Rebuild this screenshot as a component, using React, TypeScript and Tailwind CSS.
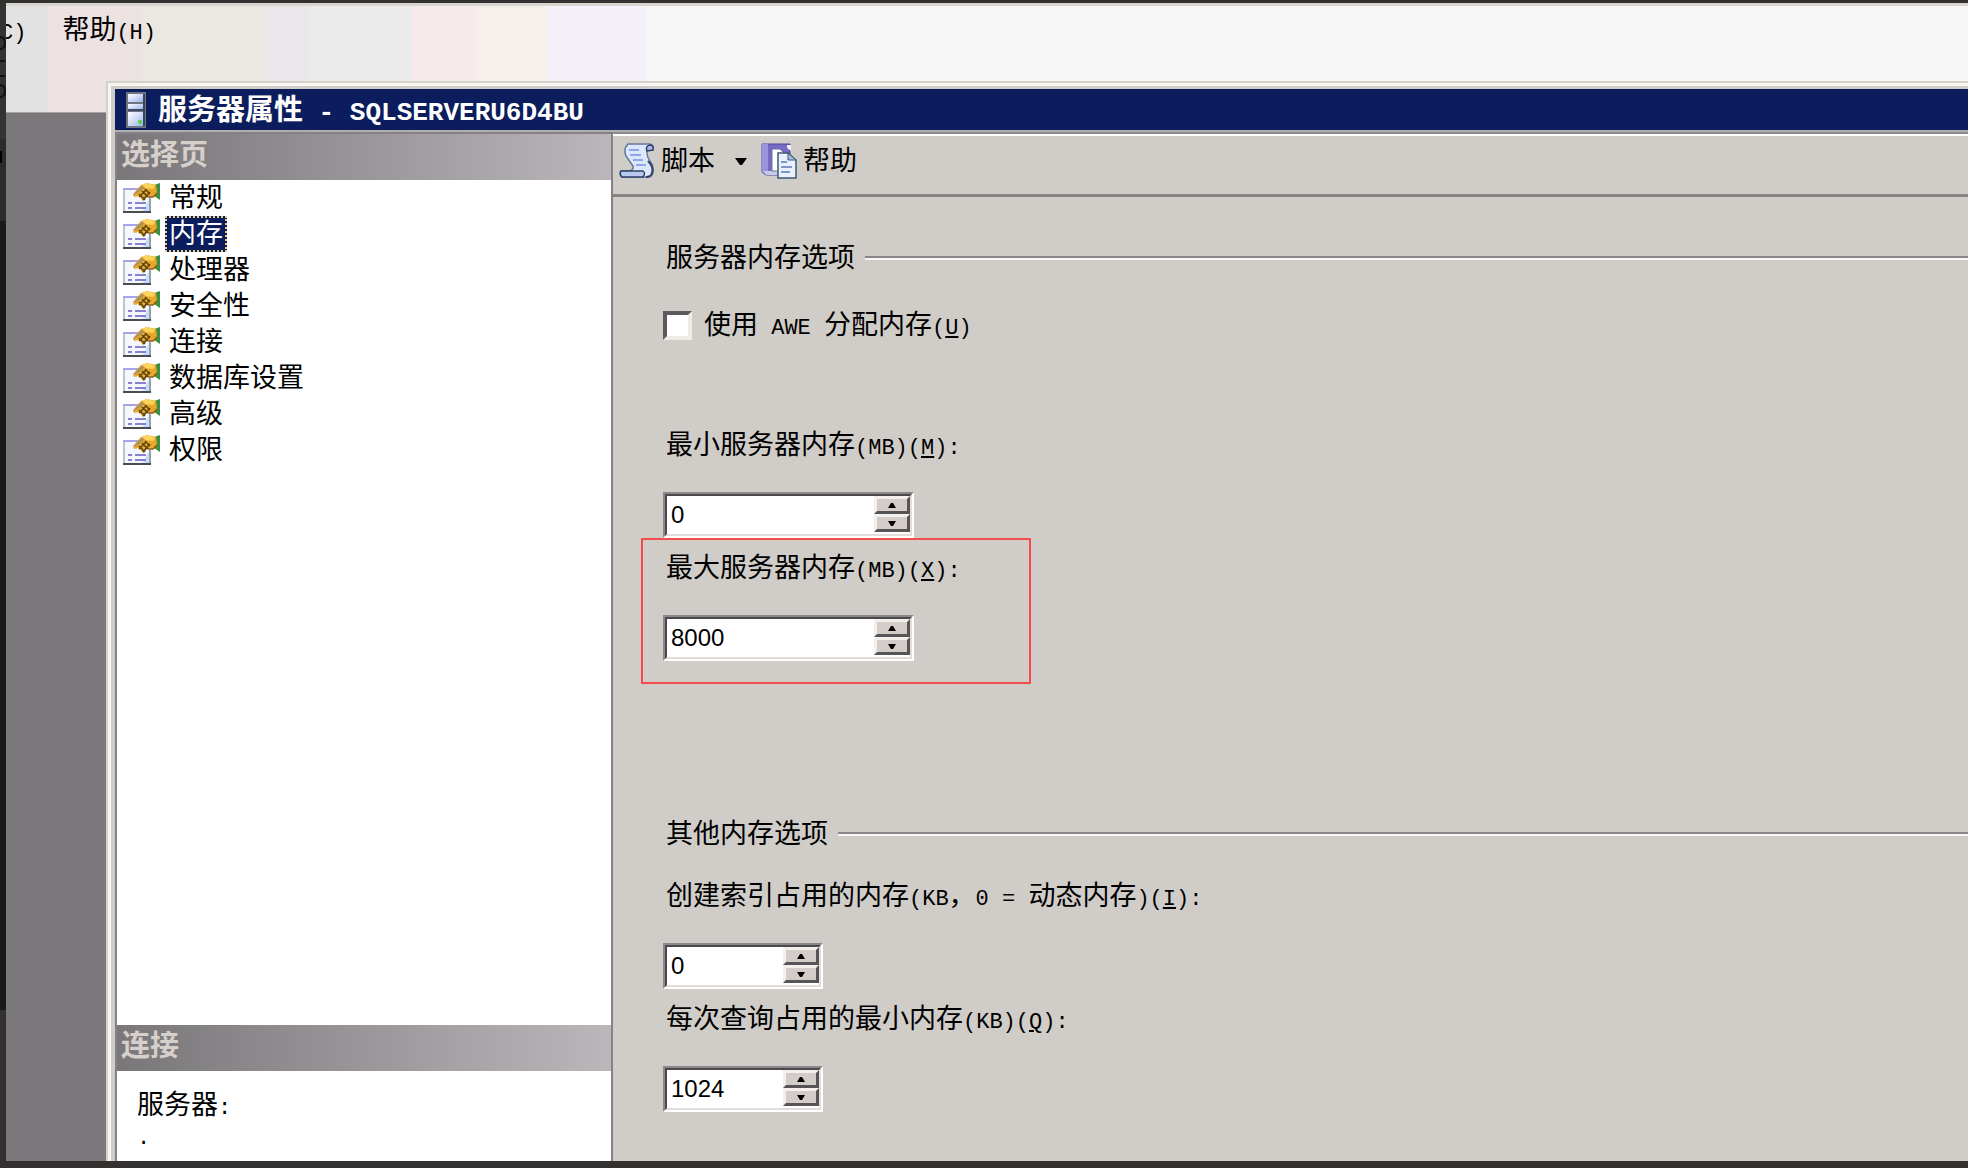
import type { ReactNode } from "react";
import { useState } from "react";

const pages = ["常规", "内存", "处理器", "安全性", "连接", "数据库设置", "高级", "权限"];

function Latin({ children }: { children: ReactNode }) {
  return (
    <span className="font-['Liberation_Mono',monospace] text-[22px] leading-none whitespace-pre">
      {children}
    </span>
  );
}

function ServerIcon() {
  return (
    <svg viewBox="0 0 20 36" className="h-9 w-5 shrink-0" aria-hidden="true">
      <defs>
        <linearGradient id="server" x1="0" y1="0" x2="1" y2="1">
          <stop offset="0" stopColor="#ffffff" />
          <stop offset="1" stopColor="#9fb4ec" />
        </linearGradient>
      </defs>
      <rect x="0" y="0" width="20" height="36" fill="#6f7683" />
      <rect x="2" y="2" width="15" height="8" fill="url(#server)" />
      <rect x="2" y="12" width="15" height="5" fill="url(#server)" />
      <rect x="2" y="20" width="15" height="14" fill="url(#server)" />
      <rect x="17" y="2" width="2" height="32" fill="#3c4557" />
      <rect x="2" y="17" width="15" height="2" fill="#404a66" />
      <circle cx="14" cy="30" r="2" fill="#4fd53a" />
    </svg>
  );
}

function PageIcon() {
  return (
    <svg viewBox="0 0 37 32" className="h-8 w-[37px] shrink-0" aria-hidden="true">
      <rect x="1" y="7" width="26" height="23" fill="#f4f7ff" />
      <path d="M19 30 L27 16 V30 Z" fill="#c3e0f8" />
      <path d="M1 7 V29" stroke="#c2c2c6" strokeWidth="2" />
      <path d="M0 7 H17" stroke="#a9a4e8" strokeWidth="2" />
      <path d="M27 16 V30" stroke="#98a0ae" strokeWidth="2" />
      <path d="M0 30 H28" stroke="#4c4c50" strokeWidth="2" />
      <path d="M5 21 H9 M12 21 H23 M5 26 H9 M12 26 H23" stroke="#8a80d0" strokeWidth="2" />
      <path d="M31 3 L37 1 V18 L31 14 Z" fill="#3f8f42" />
      <path d="M10 12 L18 3 L24 1 L33 3 L34 11 L29 15 L25 14 L20 19 L16 14 L11 15 Z" fill="#e9a82b" />
      <path d="M19 3 L25 1 L32 4 L30 7 L22 6 Z" fill="#ffd45a" />
      <path d="M10 13 L18 4 L22 5 L15 11 Z" fill="#a9925a" />
      <path d="M16 12 L22 18 M19 9 L25 15 M22 7 L27 12 M16 15 L23 8 M20 18 L27 10" stroke="#5b4310" strokeWidth="1.5" />
      <path d="M25 15 L30 15 L34 11" stroke="#8f5a12" strokeWidth="1.5" fill="none" />
    </svg>
  );
}

function ScriptIcon() {
  return (
    <svg viewBox="0 0 36 36" className="size-9 shrink-0" aria-hidden="true">
      <path
        d="M9 1 H31 Q35 2 34 7 H28 V10 Q28 14 31 18 Q35 23 34 29 Q33 34 29 34 H3 Q0 31 2 28 H10 Q15 27 14 23 L7 13 Q4 6 9 1 Z"
        fill="#dce6fc"
        stroke="#66779c"
        strokeWidth="1.5"
      />
      <path d="M28 8 Q26 3 31 2 Q35 2 34 7 Z" fill="#a8bbe0" stroke="#2e4166" strokeWidth="1.5" />
      <path d="M29 18 Q35 24 33 30 Q32 34 27 34" stroke="#2e4166" strokeWidth="2" fill="none" />
      <path d="M2 28 H24 Q27 30 24 34 H3 Q0 31 2 28 Z" fill="#b9c9ef" stroke="#2e4166" strokeWidth="1.5" />
      <path d="M10 7 H20 M11 12 H22 M14 17 H24 M17 22 H27" stroke="#91a6e8" strokeWidth="2" />
    </svg>
  );
}

function HelpIcon() {
  return (
    <svg viewBox="0 0 36 36" className="size-9 shrink-0" aria-hidden="true">
      <path d="M1 1 H29 V29 L25 32 H5 L1 29 Z" fill="#7769c4" stroke="#51499b" strokeWidth="1" />
      <path d="M1 1 H7 V32 L1 29 Z" fill="#9c92de" />
      <path d="M2 28 H22 V32 H5 Z" fill="#c9c8e8" />
      <path d="M26 2 H30 V8 L26 5 Z" fill="#f3f1ff" />
      <path d="M11 6 H19 L24 11 V28 H11 Z" fill="#ffffff" stroke="#667996" strokeWidth="1" />
      <path d="M17 10 H27 L35 17 V35 H17 Z" fill="#e9f1fd" stroke="#3d5878" strokeWidth="1.5" />
      <path d="M27 10 V17 H35 Z" fill="#a9bed8" stroke="#3d5878" strokeWidth="1" />
      <path d="M20 19 H26 M20 24 H31 M20 29 H29" stroke="#7f96c8" strokeWidth="2" />
    </svg>
  );
}

function Arrow({ down }: { down?: boolean }) {
  return (
    <svg viewBox="0 0 8 5" className="h-[5px] w-2" aria-hidden="true">
      <path d={down ? "M0 0 H8 L5 5 H3 Z" : "M0 5 H8 L5 0 H3 Z"} fill="#000" />
    </svg>
  );
}

const spinClass =
  "flex h-[18px] w-9 items-center justify-center border-3 border-t-[#f3efec] border-l-[#f3efec] border-r-[#565456] border-b-[#565456] bg-[#d3ccc8]";

interface FieldProps {
  id: string;
  label: ReactNode;
  initial: number;
  wide?: boolean;
}

function NumberField({ id, label, initial, wide }: FieldProps) {
  const [value, setValue] = useState(initial);

  return (
    <div>
      <label htmlFor={id} className="block h-9 pl-[3px] whitespace-nowrap">
        {label}
      </label>

      <div
        className={`mt-[29px] border-2 border-t-[#8a888a] border-l-[#8a888a] border-r-white border-b-white ${
          wide ? "w-[251px]" : "w-40"
        }`}
      >
        <div className="flex h-[42px] border-2 border-t-[#4b494b] border-l-[#4b494b] border-r-[#e2ddd9] border-b-[#e2ddd9] bg-white">
          <input
            id={id}
            type="text"
            inputMode="numeric"
            value={value}
            onChange={(e) => setValue(Number(e.target.value) || 0)}
            className="min-w-0 flex-1 pl-1 text-2xl leading-none outline-none"
          />
          <div className="flex flex-col">
            <button type="button" aria-label="+" className={spinClass} onClick={() => setValue(value + 1)}>
              <Arrow />
            </button>
            <button type="button" aria-label="-" className={spinClass} onClick={() => setValue(Math.max(0, value - 1))}>
              <Arrow down />
            </button>
          </div>
        </div>
      </div>
    </div>
  );
}

function SectionTitle({ children }: { children: ReactNode }) {
  return (
    <div className="flex h-9 items-center gap-[10px] pl-[3px]">
      <h2 className="whitespace-nowrap">{children}</h2>
      <div className="h-1 flex-1 border-t-2 border-b-2 border-t-[#88858a] border-b-[#f8f7f6]" />
    </div>
  );
}

function PanelHeader({ children }: { children: ReactNode }) {
  return (
    <h2 className="h-[46px] shrink-0 bg-linear-to-r from-[#7a777a] to-[#bab6ba] pl-1 text-[29px] leading-[42px] font-bold text-[#d6cfca]">
      {children}
    </h2>
  );
}

export default function App() {
  const [selected, setSelected] = useState("内存");

  return (
    <div className="flex min-h-screen flex-col overflow-hidden bg-[#333130] pt-[3px] pb-[7px] font-['Liberation_Sans','Noto_Sans_CJK_SC',sans-serif] text-[27px] leading-9 text-black">
      <div className="flex flex-1">

        <div className="flex w-[6px] shrink-0 flex-col overflow-hidden">
          <div className="h-[136px] bg-[#333333]">
            <svg viewBox="0 0 6 136" className="h-[136px] w-[6px]" aria-hidden="true">
              <path d="M0 34 Q5 34 5 40 Q5 46 0 46 M0 58 H5 M0 73 H5 M0 82 Q5 82 5 88 Q5 94 0 94" stroke="#111" strokeWidth="2" fill="none" />
            </svg>
          </div>
          <div className="h-[82px] bg-[#2b2b2b] pt-3">
            <div className="h-3 w-[2px] bg-black" />
          </div>
          <div className="flex-1 bg-[#191919]" />
          <div className="h-[151px] bg-[#333130]" />
        </div>

        <div className="flex min-w-0 flex-1 flex-col border-t-3 border-[#d8d4cf] bg-[linear-gradient(90deg,#e2e2e2_42px,#ece2e1_42px_135px,#ebe8e2_135px_258px,#eae6ea_258px_302px,#ebebeb_302px_406px,#f6ebea_406px_471px,#f5f0ea_471px_541px,#f5f0f7_541px_640px,#f6f6f6_640px)]">
          <nav className="flex h-[75px] items-start gap-9 overflow-hidden pt-[6px]">
            <button type="button" className="-ml-[6px]">
              <Latin>C)</Latin>
            </button>
            <button type="button">
              帮助<Latin>(H)</Latin>
            </button>
          </nav>

          <div className="flex flex-1">
            <div className="mt-[31px] w-[100px] shrink-0 border-t border-[#a5a2a4] bg-[#7b787b]" />

            <div className="flex min-w-0 flex-1 flex-col border-t-2 border-l-2 border-[#d5d2cc] bg-[#d0cdc8]">
              <div className="flex flex-1 flex-col border-t-3 border-l-3 border-[#f7f6f1] pt-[3px] pl-1">

                <header className="flex h-[41px] items-center gap-3 bg-[#0c1d5d] pl-[11px] text-white">
                  <ServerIcon />
                  <h1 className="text-[29px] font-bold whitespace-nowrap">
                    服务器属性
                    <span className="font-['Liberation_Mono',monospace] text-[26px] leading-none"> - SQLSERVERU6D4BU</span>
                  </h1>
                </header>

                <div className="flex flex-1 border-t-2 border-[#b0aeb0]">
                  <aside className="flex w-[498px] shrink-0 flex-col border-t-2 border-r-2 border-l-2 border-[#858287] bg-white">
                    <PanelHeader>选择页</PanelHeader>

                    <ul className="flex-1">
                      {pages.map((page) => (
                        <li key={page} className="flex h-9 items-center gap-[5px] pl-[6px]">
                          <PageIcon />
                          <button
                            type="button"
                            onClick={() => setSelected(page)}
                            className={
                              page === selected
                                ? "flex h-9 items-center border-2 border-dotted border-[#e8cf87] bg-[#0c1d5d] px-[2px] text-white"
                                : "flex h-9 items-center px-1"
                            }
                          >
                            {page}
                          </button>
                        </li>
                      ))}
                    </ul>

                    <PanelHeader>连接</PanelHeader>
                    <div className="h-[90px] overflow-hidden pt-4 pl-5">
                      <p>服务器<Latin>:</Latin></p>
                      <p className="leading-6"><Latin>.</Latin></p>
                    </div>
                  </aside>

                  <main className="min-w-0 flex-1 border-t-2 border-[#8c8a8c]">
                    <div className="flex h-[63px] items-center border-t-2 border-b-3 border-t-white border-b-[#858585] pb-2 pl-[6px]">
                      <button type="button" className="flex items-center gap-[6px]">
                        <ScriptIcon />
                        脚本
                        <svg viewBox="0 0 12 7" className="mx-[14px] h-[7px] w-3" aria-hidden="true">
                          <path d="M0 0 H12 L7 7 H5 Z" fill="#000" />
                        </svg>
                      </button>
                      <button type="button" className="flex items-center gap-[6px]">
                        <HelpIcon />
                        帮助
                      </button>
                    </div>

                    <form className="pt-[43px] pl-[50px]">
                      <SectionTitle>服务器内存选项</SectionTitle>

                      <div className="mt-[31px] flex h-9 items-center gap-3">
                        <input
                          id="awe"
                          type="checkbox"
                          className="size-[29px] appearance-none border-4 border-t-[#5c5a5c] border-l-[#5c5a5c] border-r-[#f1ebe7] border-b-[#f1ebe7] bg-white checked:bg-[#0c1d5d]"
                        />
                        <label htmlFor="awe" className="whitespace-nowrap">
                          使用<Latin> AWE </Latin>分配内存<Latin>(<u>U</u>)</Latin>
                        </label>
                      </div>

                      <div className="mt-[84px] flex flex-col gap-3">
                        <NumberField
                          id="min-server"
                          initial={0}
                          wide
                          label={<>最小服务器内存<Latin>(MB)(<u>M</u>):</Latin></>}
                        />
                        <div className="relative">
                          <NumberField
                            id="max-server"
                            initial={8000}
                            wide
                            label={<>最大服务器内存<Latin>(MB)(<u>X</u>):</Latin></>}
                          />
                          <div className="pointer-events-none absolute -top-3 -left-[22px] h-[146px] w-[390px] border-2 border-[#f44b4b]" />
                        </div>
                      </div>

                      <div className="mt-[155px]">
                        <SectionTitle>其他内存选项</SectionTitle>
                      </div>

                      <div className="mt-[26px] flex flex-col gap-3">
                        <NumberField
                          id="index-memory"
                          initial={0}
                          label={<>创建索引占用的内存<Latin>(KB</Latin>，<Latin>0 = </Latin>动态内存<Latin>)(<u>I</u>):</Latin></>}
                        />
                        <NumberField
                          id="query-memory"
                          initial={1024}
                          label={<>每次查询占用的最小内存<Latin>(KB)(<u>Q</u>):</Latin></>}
                        />
                      </div>
                    </form>
                  </main>
                </div>

              </div>
            </div>
          </div>
        </div>

      </div>
    </div>
  );
}
